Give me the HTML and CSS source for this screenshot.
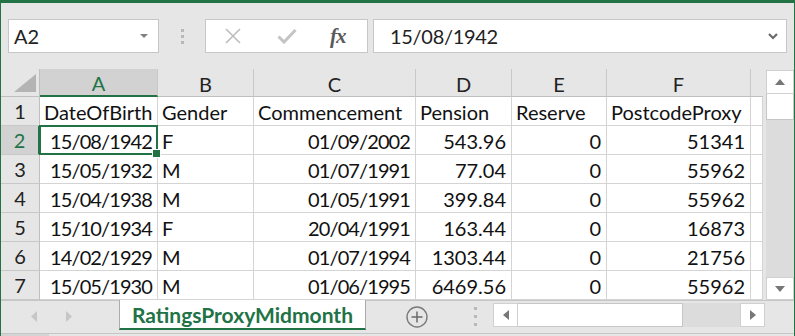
FILE: index.html
```html
<!DOCTYPE html>
<html>
<head>
    <title>RatingsProxyMidmonth</title>
    <link rel="stylesheet" href="styles.css">
</head>
<body>
<div class="window">
    <div class="formula-bar">
        <div class="name-box"><span>A2</span><span class="caret"></span></div>
        <div class="grip"><i></i><i></i><i></i></div>
        <div class="fx-box">
            <svg class="icon-x" width="16" height="16" viewBox="0 0 16 16"><path d="M1 1L15 15M15 1L1 15" stroke="#bdbdbd" stroke-width="1.6" fill="none"/></svg>
            <svg class="icon-check" width="20" height="16" viewBox="0 0 20 16"><path d="M1.5 8.5L7 14L18.5 2" stroke="#c4c4c4" stroke-width="3" fill="none"/></svg>
            <span class="fx">fx</span>
        </div>
        <div class="formula-input">
            <span>15/08/1942</span>
            <svg width="10" height="7" viewBox="0 0 10 7"><path d="M1 1L5 5L9 1" stroke="#6a6a6a" stroke-width="2.2" fill="none"/></svg>
        </div>
    </div>

    <div class="sheet-area">
        <div class="grid">
            <div class="corner"><svg width="22" height="18" viewBox="0 0 22 18"><polygon points="22,0 22,18 0,18" fill="#b4b4b4"/></svg></div>
            <div class="col-head selected">A</div>
            <div class="col-head">B</div>
            <div class="col-head">C</div>
            <div class="col-head">D</div>
            <div class="col-head">E</div>
            <div class="col-head">F</div>
            <div class="col-head last"></div>

            <div class="row-head">1</div>
            <div class="cell">DateOfBirth</div>
            <div class="cell">Gender</div>
            <div class="cell">Commencement</div>
            <div class="cell">Pension</div>
            <div class="cell">Reserve</div>
            <div class="cell">PostcodeProxy</div>
            <div class="cell"></div>

            <div class="row-head selected">2</div>
            <div class="cell num date active">15/08/1942</div>
            <div class="cell">F</div>
            <div class="cell num date">01/09/2002</div>
            <div class="cell num">543.96</div>
            <div class="cell num">0</div>
            <div class="cell num">51341</div>
            <div class="cell"></div>

            <div class="row-head">3</div>
            <div class="cell num date">15/05/1932</div>
            <div class="cell">M</div>
            <div class="cell num date">01/07/1991</div>
            <div class="cell num">77.04</div>
            <div class="cell num">0</div>
            <div class="cell num">55962</div>
            <div class="cell"></div>

            <div class="row-head">4</div>
            <div class="cell num date">15/04/1938</div>
            <div class="cell">M</div>
            <div class="cell num date">01/05/1991</div>
            <div class="cell num">399.84</div>
            <div class="cell num">0</div>
            <div class="cell num">55962</div>
            <div class="cell"></div>

            <div class="row-head">5</div>
            <div class="cell num date">15/10/1934</div>
            <div class="cell">F</div>
            <div class="cell num date">20/04/1991</div>
            <div class="cell num">163.44</div>
            <div class="cell num">0</div>
            <div class="cell num">16873</div>
            <div class="cell"></div>

            <div class="row-head">6</div>
            <div class="cell num date">14/02/1929</div>
            <div class="cell">M</div>
            <div class="cell num date">01/07/1994</div>
            <div class="cell num">1303.44</div>
            <div class="cell num">0</div>
            <div class="cell num">21756</div>
            <div class="cell"></div>

            <div class="row-head">7</div>
            <div class="cell num date">15/05/1930</div>
            <div class="cell">M</div>
            <div class="cell num date">01/06/1995</div>
            <div class="cell num">6469.56</div>
            <div class="cell num">0</div>
            <div class="cell num">55962</div>
            <div class="cell"></div>
        </div>

        <div class="vscroll">
            <div class="sbtn"><svg width="10" height="6" viewBox="0 0 10 6"><polygon points="5,0 10,6 0,6" fill="#777"/></svg></div>
            <div class="vthumb"></div>
            <div class="track"></div>
            <div class="sbtn down"><svg width="10" height="6" viewBox="0 0 10 6"><polygon points="0,0 10,0 5,6" fill="#777"/></svg></div>
        </div>
    </div>

    <div class="tab-bar">
        <div class="sheet-nav">
            <svg width="6" height="11" viewBox="0 0 6 11"><polygon points="6,0 6,11 0,5.5" fill="#c6c6c6"/></svg>
            <svg width="6" height="11" viewBox="0 0 6 11"><polygon points="0,0 0,11 6,5.5" fill="#c6c6c6"/></svg>
        </div>
        <div class="tab">RatingsProxyMidmonth</div>
        <div class="add-sheet">
            <svg width="22" height="22" viewBox="0 0 22 22"><circle cx="11" cy="11" r="10" stroke="#7a7a7a" stroke-width="1.4" fill="none"/><path d="M11 5.5V16.5M5.5 11H16.5" stroke="#6a6a6a" stroke-width="1.5"/></svg>
        </div>
        <div class="grip small"><i></i><i></i><i></i></div>
        <div class="hscroll">
            <div class="sbtn"><svg width="6" height="10" viewBox="0 0 6 10"><polygon points="6,0 6,10 0,5" fill="#777"/></svg></div>
            <div class="hthumb"></div>
            <div class="track"></div>
            <div class="sbtn"><svg width="6" height="10" viewBox="0 0 6 10"><polygon points="0,0 0,10 6,5" fill="#777"/></svg></div>
        </div>
    </div>
    <div class="status-strip"><div class="strip-bit"></div></div>
</div>
</body>
</html>
```

FILE: styles.css
```css
* {
    box-sizing: border-box;
}
body {
    margin: 0;
    font-family: "Lato", "Liberation Sans", sans-serif;
    background-color: #e6e6e6;
    color: #111;
}
.window {
    width: 795px;
    height: 336px;
    border-top: 3px solid #217346;
    border-left: 1px solid #217346;
    border-right: 1px solid #217346;
    background-color: #e6e6e6;
    display: flex;
    flex-direction: column;
    overflow: hidden;
}

/* formula bar */
.formula-bar {
    height: 66px;
    flex: none;
    display: flex;
    align-items: center;
    padding: 0 7px;
}
.name-box {
    width: 151px;
    height: 34px;
    background: #fff;
    border: 1px solid #c6c6c6;
    display: flex;
    align-items: center;
    justify-content: space-between;
    padding: 0 10px 0 5px;
    font-size: 20px;
    color: #222;
}
.caret {
    width: 0;
    height: 0;
    border-left: 4px solid transparent;
    border-right: 4px solid transparent;
    border-top: 4px solid #808080;
}
.grip {
    width: 46px;
    display: flex;
    flex-direction: column;
    align-items: center;
    gap: 3px;
}
.grip i {
    display: block;
    width: 3px;
    height: 3px;
    background: #b8b8b8;
}
.fx-box {
    width: 163px;
    height: 34px;
    background: #fff;
    border: 1px solid #c6c6c6;
    display: flex;
    align-items: center;
}
.icon-x {
    margin-left: 19px;
}
.icon-check {
    margin-left: 36px;
}
.fx {
    margin-left: 33px;
    font-family: "Liberation Serif", "DejaVu Serif", serif;
    font-style: italic;
    font-weight: bold;
    font-size: 21px;
    color: #5a5a5a;
    letter-spacing: -1px;
}
.formula-input {
    margin-left: 5px;
    width: 414px;
    height: 34px;
    background: #fff;
    border: 1px solid #c6c6c6;
    display: flex;
    align-items: center;
    justify-content: space-between;
    padding: 0 8px 0 16px;
    font-size: 20px;
    color: #222;
    letter-spacing: -0.3px;
}

/* sheet */
.sheet-area {
    height: 231px;
    flex: none;
    display: flex;
}
.grid {
    width: 762px;
    display: grid;
    grid-template-columns: 39px 118px 96px 162px 96px 95px 144px 12px;
    grid-template-rows: 28px repeat(7, 29px);
    font-size: 20px;
}
.corner {
    border-bottom: 1px solid #bfbfbf;
    border-right: 1px solid #bfbfbf;
    display: flex;
    align-items: flex-end;
    justify-content: flex-end;
    padding: 0 3px 4px 0;
}
.col-head {
    display: flex;
    align-items: center;
    justify-content: center;
    border-right: 1px solid #c8c8c8;
    border-bottom: 1px solid #bfbfbf;
    color: #222;
    padding-top: 2px;
}
.col-head.last {
    border-right: none;
}
.col-head.selected {
    background: #d2d2d2;
    color: #217346;
    border-bottom: 2px solid #217346;
}
.row-head {
    display: flex;
    align-items: center;
    justify-content: center;
    border-right: 1px solid #bfbfbf;
    border-bottom: 1px solid #c8c8c8;
    color: #222;
}
.row-head.selected {
    background: #d2d2d2;
    color: #217346;
    border-right: 2px solid #217346;
}
.cell {
    background: #fff;
    border-right: 1px solid #d4d4d4;
    border-bottom: 1px solid #d4d4d4;
    display: flex;
    align-items: center;
    padding: 1px 3px 0 4px;
    white-space: nowrap;
    overflow: hidden;
}
.cell.num {
    justify-content: flex-end;
    padding-right: 5px;
}
.cell.date {
    letter-spacing: -0.9px;
}
.cell.active {
    position: relative;
    overflow: visible;
}
.cell.active::before {
    content: "";
    position: absolute;
    left: -1px;
    top: -1px;
    right: -1px;
    bottom: -1px;
    border: 2px solid #217346;
}
.cell.active::after {
    content: "";
    position: absolute;
    right: -4px;
    bottom: -4px;
    width: 7px;
    height: 7px;
    background: #217346;
    border: 1px solid #fff;
    z-index: 2;
}

/* scrollbars */
.vscroll {
    margin-left: 3px;
    width: 28px;
    display: flex;
    flex-direction: column;
    padding-top: 1px;
}
.sbtn {
    background: #fff;
    border: 1px solid #d0d0d0;
    display: flex;
    align-items: center;
    justify-content: center;
}
.vscroll .sbtn {
    height: 24px;
}
.vscroll .sbtn.down {
    height: 23px;
}
.vthumb {
    height: 26px;
    background: #fff;
    border: 1px solid #c6c6c6;
    border-top: none;
}
.track {
    flex: 1;
    background: #dcdcdc;
}

/* sheet tabs */
.tab-bar {
    height: 33px;
    flex: none;
    display: flex;
    align-items: flex-start;
    border-top: 1px solid #c6c6c6;
}
.sheet-nav {
    width: 118px;
    height: 31px;
    display: flex;
    align-items: center;
    padding-left: 30px;
    gap: 29px;
}
.tab {
    width: 247px;
    height: 30px;
    margin-top: -1px;
    background: #fff;
    border-left: 1px solid #ababab;
    border-right: 1px solid #ababab;
    border-bottom: 2px solid #217346;
    color: #217346;
    font-weight: bold;
    font-size: 21px;
    display: flex;
    align-items: center;
    justify-content: center;
}
.add-sheet {
    width: 107px;
    height: 31px;
    display: flex;
    align-items: center;
    padding-left: 40px;
}
.grip.small {
    width: 4px;
    height: 31px;
    justify-content: center;
    gap: 5px;
}
.hscroll {
    margin-left: 16px;
    margin-top: 2px;
    width: 272px;
    height: 24px;
    display: flex;
}
.hscroll .sbtn {
    width: 25px;
}
.hthumb {
    width: 165px;
    background: #fff;
    border: 1px solid #c6c6c6;
    border-left: none;
}
.status-strip {
    flex: 1;
    border-top: 1px solid #c6c6c6;
    background: #e6e6e6;
}
.strip-bit {
    width: 48px;
    height: 100%;
    background: #d4d4d4;
}
```
